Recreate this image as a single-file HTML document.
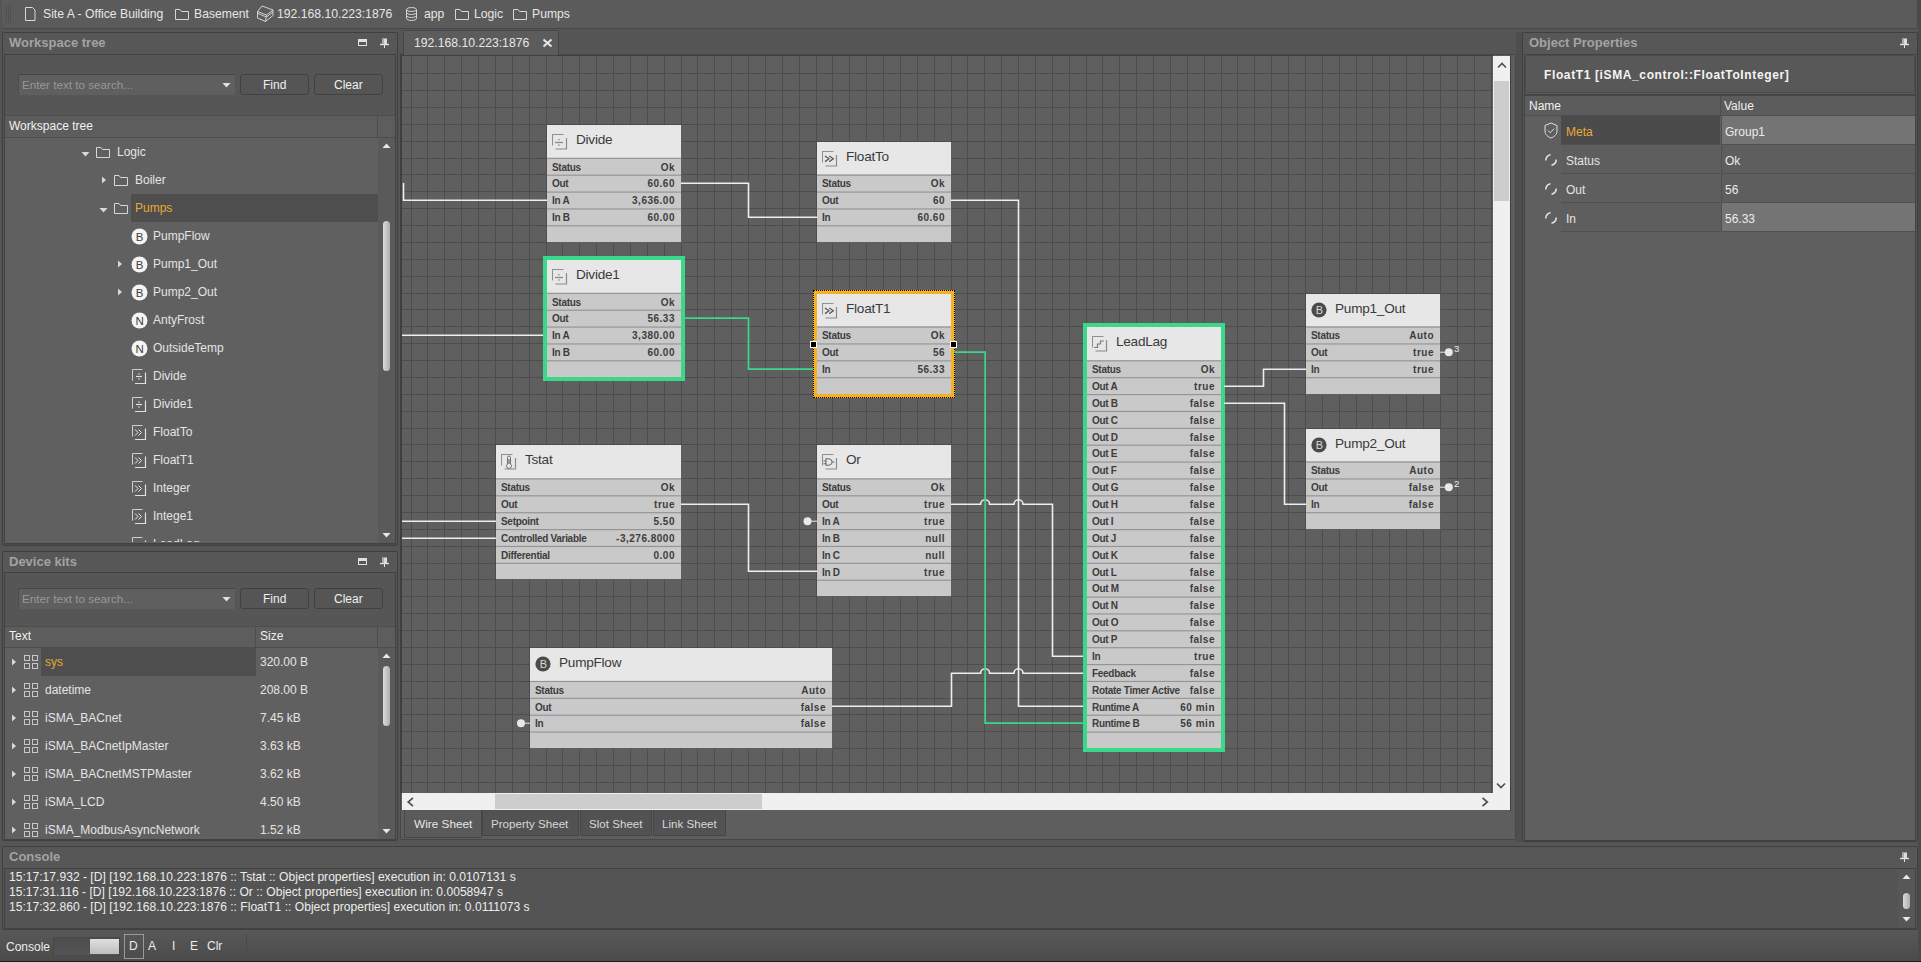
<!DOCTYPE html><html><head><meta charset="utf-8"><style>
*{box-sizing:border-box;margin:0;padding:0}
html,body{width:1921px;height:962px;overflow:hidden;background:#555555;font-family:"Liberation Sans", sans-serif;}
.ab{position:absolute}
.t{position:absolute;white-space:pre;line-height:1}
</style></head><body><div class="ab" style="left:0;top:0;width:1921px;height:962px;overflow:hidden">

<div class="ab" style="left:2px;top:0;width:1916px;height:29px;background:#5b5b5b;border-bottom:1px solid #474747;border-right:1px solid #4a4a4a;border-radius:0 0 3px 3px"></div>
<div class="ab" style="left:1918px;top:0;width:3px;height:962px;background:#4a4a4a"></div>
<div class="ab" style="left:6px;top:5px;width:1px;height:18px;background:#505050"></div>
<div class="ab" style="left:8px;top:5px;width:1px;height:18px;background:#505050"></div>
<div class="ab" style="left:10px;top:5px;width:1px;height:18px;background:#505050"></div>
<svg class="ab" style="left:24px;top:6px" width="12" height="16" viewBox="0 0 12 16"><path d="M1.5 1.5h7l2.5 2.5v10.5h-9.5z" fill="none" stroke="#d8d8d8" stroke-width="1"/></svg>
<div class="t" style="left:43px;top:8px;font-size:12.2px;color:#e6e6e6;">Site A - Office Building</div>
<svg class="ab" style="left:174px;top:7px" width="16" height="14" viewBox="0 0 16 14"><path d="M1.5 2.5h4.5l1.5 2h7v8h-13z" fill="none" stroke="#d6d6d6" stroke-width="1" stroke-linejoin="round"/></svg>
<div class="t" style="left:194px;top:8px;font-size:12.2px;color:#e6e6e6;">Basement</div>
<svg class="ab" style="left:256px;top:5px" width="19" height="19" viewBox="0 0 19 19"><path d="M1.5 6.5L6 1L17 5L17 10.5L9.5 16.5L1.5 13Z M1.5 6.5L10.5 10L17 5 M10.5 10L9.5 16.5 M2 8.5L10.5 12L17 7" fill="none" stroke="#d2d2d2" stroke-width="1" stroke-linejoin="round"/></svg>
<div class="t" style="left:277px;top:8px;font-size:12.2px;color:#e6e6e6;">192.168.10.223:1876</div>
<svg class="ab" style="left:405px;top:6px" width="13" height="16" viewBox="0 0 13 16"><ellipse cx="6.5" cy="3.5" rx="5" ry="2" fill="none" stroke="#d6d6d6"/><path d="M1.5 3.5v9c0 1.1 2.2 2 5 2s5-.9 5-2v-9 M1.5 6.5c0 1.1 2.2 2 5 2s5-.9 5-2 M1.5 9.5c0 1.1 2.2 2 5 2s5-.9 5-2" fill="none" stroke="#d6d6d6"/></svg>
<div class="t" style="left:424px;top:8px;font-size:12.2px;color:#e6e6e6;">app</div>
<svg class="ab" style="left:454px;top:7px" width="16" height="14" viewBox="0 0 16 14"><path d="M1.5 2.5h4.5l1.5 2h7v8h-13z" fill="none" stroke="#d6d6d6" stroke-width="1" stroke-linejoin="round"/></svg>
<div class="t" style="left:474px;top:8px;font-size:12.2px;color:#e6e6e6;">Logic</div>
<svg class="ab" style="left:512px;top:7px" width="16" height="14" viewBox="0 0 16 14"><path d="M1.5 2.5h4.5l1.5 2h7v8h-13z" fill="none" stroke="#d6d6d6" stroke-width="1" stroke-linejoin="round"/></svg>
<div class="t" style="left:532px;top:8px;font-size:12.2px;color:#e6e6e6;">Pumps</div>
<div class="ab" style="left:2px;top:32px;width:396px;height:514px;background:#575757;border:1px solid #3f3f3f;border-radius:2px"></div>
<div class="t" style="left:9px;top:36px;font-size:13px;color:#a3a3a3;font-weight:bold;">Workspace tree</div>
<svg class="ab" style="left:380px;top:38px" width="9" height="10" viewBox="0 0 9 10"><path d="M2 0.5h5v5.5h-5z" fill="#dcdcdc"/><path d="M0 6.5h9" stroke="#e0e0e0" stroke-width="1.4"/><path d="M4.5 7v3" stroke="#e0e0e0" stroke-width="1"/><path d="M3 1v5" stroke="#7a7a7a" stroke-width="1"/></svg>
<div class="ab" style="left:358px;top:39px;width:9px;height:7px;border:1.5px solid #e0e0e0;border-top-width:3px"></div>
<div class="ab" style="left:2px;top:551px;width:396px;height:290px;background:#575757;border:1px solid #3f3f3f;border-radius:2px"></div>
<div class="t" style="left:9px;top:555px;font-size:13px;color:#a3a3a3;font-weight:bold;">Device kits</div>
<svg class="ab" style="left:380px;top:557px" width="9" height="10" viewBox="0 0 9 10"><path d="M2 0.5h5v5.5h-5z" fill="#dcdcdc"/><path d="M0 6.5h9" stroke="#e0e0e0" stroke-width="1.4"/><path d="M4.5 7v3" stroke="#e0e0e0" stroke-width="1"/><path d="M3 1v5" stroke="#7a7a7a" stroke-width="1"/></svg>
<div class="ab" style="left:358px;top:558px;width:9px;height:7px;border:1.5px solid #e0e0e0;border-top-width:3px"></div>
<div class="ab" style="left:1522px;top:32px;width:396px;height:810px;background:#575757;border:1px solid #3f3f3f;border-radius:2px"></div>
<div class="t" style="left:1529px;top:36px;font-size:13px;color:#a3a3a3;font-weight:bold;">Object Properties</div>
<svg class="ab" style="left:1900px;top:38px" width="9" height="10" viewBox="0 0 9 10"><path d="M2 0.5h5v5.5h-5z" fill="#dcdcdc"/><path d="M0 6.5h9" stroke="#e0e0e0" stroke-width="1.4"/><path d="M4.5 7v3" stroke="#e0e0e0" stroke-width="1"/><path d="M3 1v5" stroke="#7a7a7a" stroke-width="1"/></svg>
<div class="ab" style="left:2px;top:846px;width:1916px;height:84px;background:#575757;border:1px solid #3f3f3f;border-radius:2px"></div>
<div class="t" style="left:9px;top:850px;font-size:13px;color:#a3a3a3;font-weight:bold;">Console</div>
<svg class="ab" style="left:1900px;top:852px" width="9" height="10" viewBox="0 0 9 10"><path d="M2 0.5h5v5.5h-5z" fill="#dcdcdc"/><path d="M0 6.5h9" stroke="#e0e0e0" stroke-width="1.4"/><path d="M4.5 7v3" stroke="#e0e0e0" stroke-width="1"/><path d="M3 1v5" stroke="#7a7a7a" stroke-width="1"/></svg>
<div class="ab" style="left:400px;top:54px;width:1116px;height:786px;background:#5e5e5e;border:1px solid #474747;border-radius:2px"></div>
<div class="ab" style="left:403px;top:30px;width:156px;height:26px;background:#5c5c5c;border:1px solid #474747;border-bottom:none;border-radius:2px 2px 0 0"></div>
<div class="t" style="left:414px;top:37px;font-size:12.2px;color:#e6e6e6;">192.168.10.223:1876</div>
<svg class="ab" style="left:542px;top:38px" width="11" height="10" viewBox="0 0 11 10"><path d="M1.5 1.5l8 7 M9.5 1.5l-8 7" stroke="#e8e8e8" stroke-width="2"/></svg>
<div class="ab" style="left:400px;top:55px;width:1093px;height:1px;background:#404040"></div>
<div class="ab" style="left:400px;top:54px;width:2px;height:739px;background:#404040"></div>
<div class="ab" style="left:402px;top:56px;width:1091px;height:737px;background:#5f5f5f;overflow:hidden">
<div class="ab" style="left:9px;top:0;width:1px;height:737px;background:#4d4d4d"></div>
<div class="ab" style="left:25px;top:0;width:1px;height:737px;background:#4d4d4d"></div>
<div class="ab" style="left:42px;top:0;width:1px;height:737px;background:#4d4d4d"></div>
<div class="ab" style="left:59px;top:0;width:1px;height:737px;background:#4d4d4d"></div>
<div class="ab" style="left:76px;top:0;width:1px;height:737px;background:#4d4d4d"></div>
<div class="ab" style="left:93px;top:0;width:1px;height:737px;background:#4d4d4d"></div>
<div class="ab" style="left:110px;top:0;width:1px;height:737px;background:#4d4d4d"></div>
<div class="ab" style="left:127px;top:0;width:1px;height:737px;background:#4d4d4d"></div>
<div class="ab" style="left:144px;top:0;width:1px;height:737px;background:#4d4d4d"></div>
<div class="ab" style="left:160px;top:0;width:1px;height:737px;background:#4d4d4d"></div>
<div class="ab" style="left:177px;top:0;width:1px;height:737px;background:#4d4d4d"></div>
<div class="ab" style="left:194px;top:0;width:1px;height:737px;background:#4d4d4d"></div>
<div class="ab" style="left:211px;top:0;width:1px;height:737px;background:#4d4d4d"></div>
<div class="ab" style="left:228px;top:0;width:1px;height:737px;background:#4d4d4d"></div>
<div class="ab" style="left:245px;top:0;width:1px;height:737px;background:#4d4d4d"></div>
<div class="ab" style="left:262px;top:0;width:1px;height:737px;background:#4d4d4d"></div>
<div class="ab" style="left:279px;top:0;width:1px;height:737px;background:#4d4d4d"></div>
<div class="ab" style="left:295px;top:0;width:1px;height:737px;background:#4d4d4d"></div>
<div class="ab" style="left:312px;top:0;width:1px;height:737px;background:#4d4d4d"></div>
<div class="ab" style="left:329px;top:0;width:1px;height:737px;background:#4d4d4d"></div>
<div class="ab" style="left:346px;top:0;width:1px;height:737px;background:#4d4d4d"></div>
<div class="ab" style="left:363px;top:0;width:1px;height:737px;background:#4d4d4d"></div>
<div class="ab" style="left:380px;top:0;width:1px;height:737px;background:#4d4d4d"></div>
<div class="ab" style="left:397px;top:0;width:1px;height:737px;background:#4d4d4d"></div>
<div class="ab" style="left:414px;top:0;width:1px;height:737px;background:#4d4d4d"></div>
<div class="ab" style="left:430px;top:0;width:1px;height:737px;background:#4d4d4d"></div>
<div class="ab" style="left:447px;top:0;width:1px;height:737px;background:#4d4d4d"></div>
<div class="ab" style="left:464px;top:0;width:1px;height:737px;background:#4d4d4d"></div>
<div class="ab" style="left:481px;top:0;width:1px;height:737px;background:#4d4d4d"></div>
<div class="ab" style="left:498px;top:0;width:1px;height:737px;background:#4d4d4d"></div>
<div class="ab" style="left:515px;top:0;width:1px;height:737px;background:#4d4d4d"></div>
<div class="ab" style="left:532px;top:0;width:1px;height:737px;background:#4d4d4d"></div>
<div class="ab" style="left:549px;top:0;width:1px;height:737px;background:#4d4d4d"></div>
<div class="ab" style="left:565px;top:0;width:1px;height:737px;background:#4d4d4d"></div>
<div class="ab" style="left:582px;top:0;width:1px;height:737px;background:#4d4d4d"></div>
<div class="ab" style="left:599px;top:0;width:1px;height:737px;background:#4d4d4d"></div>
<div class="ab" style="left:616px;top:0;width:1px;height:737px;background:#4d4d4d"></div>
<div class="ab" style="left:633px;top:0;width:1px;height:737px;background:#4d4d4d"></div>
<div class="ab" style="left:650px;top:0;width:1px;height:737px;background:#4d4d4d"></div>
<div class="ab" style="left:667px;top:0;width:1px;height:737px;background:#4d4d4d"></div>
<div class="ab" style="left:684px;top:0;width:1px;height:737px;background:#4d4d4d"></div>
<div class="ab" style="left:700px;top:0;width:1px;height:737px;background:#4d4d4d"></div>
<div class="ab" style="left:717px;top:0;width:1px;height:737px;background:#4d4d4d"></div>
<div class="ab" style="left:734px;top:0;width:1px;height:737px;background:#4d4d4d"></div>
<div class="ab" style="left:751px;top:0;width:1px;height:737px;background:#4d4d4d"></div>
<div class="ab" style="left:768px;top:0;width:1px;height:737px;background:#4d4d4d"></div>
<div class="ab" style="left:785px;top:0;width:1px;height:737px;background:#4d4d4d"></div>
<div class="ab" style="left:802px;top:0;width:1px;height:737px;background:#4d4d4d"></div>
<div class="ab" style="left:819px;top:0;width:1px;height:737px;background:#4d4d4d"></div>
<div class="ab" style="left:835px;top:0;width:1px;height:737px;background:#4d4d4d"></div>
<div class="ab" style="left:852px;top:0;width:1px;height:737px;background:#4d4d4d"></div>
<div class="ab" style="left:869px;top:0;width:1px;height:737px;background:#4d4d4d"></div>
<div class="ab" style="left:886px;top:0;width:1px;height:737px;background:#4d4d4d"></div>
<div class="ab" style="left:903px;top:0;width:1px;height:737px;background:#4d4d4d"></div>
<div class="ab" style="left:920px;top:0;width:1px;height:737px;background:#4d4d4d"></div>
<div class="ab" style="left:937px;top:0;width:1px;height:737px;background:#4d4d4d"></div>
<div class="ab" style="left:954px;top:0;width:1px;height:737px;background:#4d4d4d"></div>
<div class="ab" style="left:970px;top:0;width:1px;height:737px;background:#4d4d4d"></div>
<div class="ab" style="left:987px;top:0;width:1px;height:737px;background:#4d4d4d"></div>
<div class="ab" style="left:1004px;top:0;width:1px;height:737px;background:#4d4d4d"></div>
<div class="ab" style="left:1021px;top:0;width:1px;height:737px;background:#4d4d4d"></div>
<div class="ab" style="left:1038px;top:0;width:1px;height:737px;background:#4d4d4d"></div>
<div class="ab" style="left:1055px;top:0;width:1px;height:737px;background:#4d4d4d"></div>
<div class="ab" style="left:1072px;top:0;width:1px;height:737px;background:#4d4d4d"></div>
<div class="ab" style="left:1089px;top:0;width:1px;height:737px;background:#4d4d4d"></div>
<div class="ab" style="left:0;top:17px;width:1091px;height:1px;background:#4d4d4d"></div>
<div class="ab" style="left:0;top:34px;width:1091px;height:1px;background:#4d4d4d"></div>
<div class="ab" style="left:0;top:51px;width:1091px;height:1px;background:#4d4d4d"></div>
<div class="ab" style="left:0;top:68px;width:1091px;height:1px;background:#4d4d4d"></div>
<div class="ab" style="left:0;top:85px;width:1091px;height:1px;background:#4d4d4d"></div>
<div class="ab" style="left:0;top:102px;width:1091px;height:1px;background:#4d4d4d"></div>
<div class="ab" style="left:0;top:118px;width:1091px;height:1px;background:#4d4d4d"></div>
<div class="ab" style="left:0;top:135px;width:1091px;height:1px;background:#4d4d4d"></div>
<div class="ab" style="left:0;top:152px;width:1091px;height:1px;background:#4d4d4d"></div>
<div class="ab" style="left:0;top:169px;width:1091px;height:1px;background:#4d4d4d"></div>
<div class="ab" style="left:0;top:186px;width:1091px;height:1px;background:#4d4d4d"></div>
<div class="ab" style="left:0;top:203px;width:1091px;height:1px;background:#4d4d4d"></div>
<div class="ab" style="left:0;top:220px;width:1091px;height:1px;background:#4d4d4d"></div>
<div class="ab" style="left:0;top:237px;width:1091px;height:1px;background:#4d4d4d"></div>
<div class="ab" style="left:0;top:253px;width:1091px;height:1px;background:#4d4d4d"></div>
<div class="ab" style="left:0;top:270px;width:1091px;height:1px;background:#4d4d4d"></div>
<div class="ab" style="left:0;top:287px;width:1091px;height:1px;background:#4d4d4d"></div>
<div class="ab" style="left:0;top:304px;width:1091px;height:1px;background:#4d4d4d"></div>
<div class="ab" style="left:0;top:321px;width:1091px;height:1px;background:#4d4d4d"></div>
<div class="ab" style="left:0;top:338px;width:1091px;height:1px;background:#4d4d4d"></div>
<div class="ab" style="left:0;top:355px;width:1091px;height:1px;background:#4d4d4d"></div>
<div class="ab" style="left:0;top:372px;width:1091px;height:1px;background:#4d4d4d"></div>
<div class="ab" style="left:0;top:388px;width:1091px;height:1px;background:#4d4d4d"></div>
<div class="ab" style="left:0;top:405px;width:1091px;height:1px;background:#4d4d4d"></div>
<div class="ab" style="left:0;top:422px;width:1091px;height:1px;background:#4d4d4d"></div>
<div class="ab" style="left:0;top:439px;width:1091px;height:1px;background:#4d4d4d"></div>
<div class="ab" style="left:0;top:456px;width:1091px;height:1px;background:#4d4d4d"></div>
<div class="ab" style="left:0;top:473px;width:1091px;height:1px;background:#4d4d4d"></div>
<div class="ab" style="left:0;top:490px;width:1091px;height:1px;background:#4d4d4d"></div>
<div class="ab" style="left:0;top:507px;width:1091px;height:1px;background:#4d4d4d"></div>
<div class="ab" style="left:0;top:523px;width:1091px;height:1px;background:#4d4d4d"></div>
<div class="ab" style="left:0;top:540px;width:1091px;height:1px;background:#4d4d4d"></div>
<div class="ab" style="left:0;top:557px;width:1091px;height:1px;background:#4d4d4d"></div>
<div class="ab" style="left:0;top:574px;width:1091px;height:1px;background:#4d4d4d"></div>
<div class="ab" style="left:0;top:591px;width:1091px;height:1px;background:#4d4d4d"></div>
<div class="ab" style="left:0;top:608px;width:1091px;height:1px;background:#4d4d4d"></div>
<div class="ab" style="left:0;top:625px;width:1091px;height:1px;background:#4d4d4d"></div>
<div class="ab" style="left:0;top:642px;width:1091px;height:1px;background:#4d4d4d"></div>
<div class="ab" style="left:0;top:658px;width:1091px;height:1px;background:#4d4d4d"></div>
<div class="ab" style="left:0;top:675px;width:1091px;height:1px;background:#4d4d4d"></div>
<div class="ab" style="left:0;top:692px;width:1091px;height:1px;background:#4d4d4d"></div>
<div class="ab" style="left:0;top:709px;width:1091px;height:1px;background:#4d4d4d"></div>
<div class="ab" style="left:0;top:726px;width:1091px;height:1px;background:#4d4d4d"></div>
<div class="ab" style="left:145px;top:69px;width:135px;height:118px;background:#5f5f5f"></div>
<div class="ab" style="left:145px;top:69px;width:134px;height:117px;background:#c9c9c9"></div>
<div class="ab" style="left:145px;top:69px;width:134px;height:33px;background:#e7e7e7"></div>
<svg class="ab" style="left:145px;top:69px" width="134" height="117"><rect x="0" y="32.75" width="134" height="1.15" fill="#949494"/><rect x="0" y="49.63" width="134" height="1.15" fill="#949494"/><rect x="0" y="66.50" width="134" height="1.15" fill="#949494"/><rect x="0" y="83.38" width="134" height="1.15" fill="#949494"/><rect x="0" y="100.25" width="134" height="1.15" fill="#949494"/></svg>
<svg class="ab" style="left:150px;top:76.5px" width="17" height="17" viewBox="0 0 17 17"><path d="M0.5 12.5v-11h11" stroke="#909090" stroke-width="1.1" fill="none"/><path d="M3.5 16h11v-11" stroke="#8a8a8a" stroke-width="1.2" fill="none"/><path d="M3 9.5h8" stroke="#8a8a8a" stroke-width="1.3"/><circle cx="7" cy="6.7" r=".8" fill="#8a8a8a"/><circle cx="7" cy="12" r=".8" fill="#8a8a8a"/></svg>
<div class="t" style="left:174px;top:77px;font-size:13.6px;color:#3a3a3a;letter-spacing:-0.25px">Divide</div>
<div class="t" style="left:150px;top:107px;font-size:10px;color:#3d3d3d;font-weight:bold;letter-spacing:-0.3px">Status</div>
<div class="t" style="left:145px;top:107px;width:128px;text-align:right;font-size:10px;color:#3d3d3d;font-weight:bold;letter-spacing:0.5px">Ok</div>
<div class="t" style="left:150px;top:123px;font-size:10px;color:#3d3d3d;font-weight:bold;letter-spacing:-0.3px">Out</div>
<div class="t" style="left:145px;top:123px;width:128px;text-align:right;font-size:10px;color:#3d3d3d;font-weight:bold;letter-spacing:0.5px">60.60</div>
<div class="t" style="left:150px;top:140px;font-size:10px;color:#3d3d3d;font-weight:bold;letter-spacing:-0.3px">In A</div>
<div class="t" style="left:145px;top:140px;width:128px;text-align:right;font-size:10px;color:#3d3d3d;font-weight:bold;letter-spacing:0.5px">3,636.00</div>
<div class="t" style="left:150px;top:157px;font-size:10px;color:#3d3d3d;font-weight:bold;letter-spacing:-0.3px">In B</div>
<div class="t" style="left:145px;top:157px;width:128px;text-align:right;font-size:10px;color:#3d3d3d;font-weight:bold;letter-spacing:0.5px">60.00</div>
<div class="ab" style="left:415px;top:86px;width:135px;height:101px;background:#5f5f5f"></div>
<div class="ab" style="left:415px;top:86px;width:134px;height:100px;background:#c9c9c9"></div>
<div class="ab" style="left:415px;top:86px;width:134px;height:32px;background:#e7e7e7"></div>
<svg class="ab" style="left:415px;top:86px" width="134" height="100"><rect x="0" y="32.63" width="134" height="1.15" fill="#949494"/><rect x="0" y="49.50" width="134" height="1.15" fill="#949494"/><rect x="0" y="66.38" width="134" height="1.15" fill="#949494"/><rect x="0" y="83.25" width="134" height="1.15" fill="#949494"/></svg>
<svg class="ab" style="left:420px;top:93.5px" width="17" height="17" viewBox="0 0 17 17"><path d="M0.5 12.5v-11h11" stroke="#909090" stroke-width="1.1" fill="none"/><path d="M3.5 16h11v-11" stroke="#8a8a8a" stroke-width="1.2" fill="none"/><path d="M3 6l4 2.8-4 2.8 M7.3 6l4 2.8-4 2.8" stroke="#5a5a5a" stroke-width="1.3" fill="none"/></svg>
<div class="t" style="left:444px;top:94px;font-size:13.6px;color:#3a3a3a;letter-spacing:-0.25px">FloatTo</div>
<div class="t" style="left:420px;top:123px;font-size:10px;color:#3d3d3d;font-weight:bold;letter-spacing:-0.3px">Status</div>
<div class="t" style="left:415px;top:123px;width:128px;text-align:right;font-size:10px;color:#3d3d3d;font-weight:bold;letter-spacing:0.5px">Ok</div>
<div class="t" style="left:420px;top:140px;font-size:10px;color:#3d3d3d;font-weight:bold;letter-spacing:-0.3px">Out</div>
<div class="t" style="left:415px;top:140px;width:128px;text-align:right;font-size:10px;color:#3d3d3d;font-weight:bold;letter-spacing:0.5px">60</div>
<div class="t" style="left:420px;top:157px;font-size:10px;color:#3d3d3d;font-weight:bold;letter-spacing:-0.3px">In</div>
<div class="t" style="left:415px;top:157px;width:128px;text-align:right;font-size:10px;color:#3d3d3d;font-weight:bold;letter-spacing:0.5px">60.60</div>
<div class="ab" style="left:141px;top:200px;width:142px;height:125px;background:#3ad88a"></div>
<div class="ab" style="left:145px;top:204px;width:134px;height:117px;background:#c9c9c9"></div>
<div class="ab" style="left:145px;top:204px;width:134px;height:33px;background:#e7e7e7"></div>
<svg class="ab" style="left:145px;top:204px" width="134" height="117"><rect x="0" y="32.75" width="134" height="1.15" fill="#949494"/><rect x="0" y="49.63" width="134" height="1.15" fill="#949494"/><rect x="0" y="66.50" width="134" height="1.15" fill="#949494"/><rect x="0" y="83.38" width="134" height="1.15" fill="#949494"/><rect x="0" y="100.25" width="134" height="1.15" fill="#949494"/></svg>
<svg class="ab" style="left:150px;top:211.5px" width="17" height="17" viewBox="0 0 17 17"><path d="M0.5 12.5v-11h11" stroke="#909090" stroke-width="1.1" fill="none"/><path d="M3.5 16h11v-11" stroke="#8a8a8a" stroke-width="1.2" fill="none"/><path d="M3 9.5h8" stroke="#8a8a8a" stroke-width="1.3"/><circle cx="7" cy="6.7" r=".8" fill="#8a8a8a"/><circle cx="7" cy="12" r=".8" fill="#8a8a8a"/></svg>
<div class="t" style="left:174px;top:212px;font-size:13.6px;color:#3a3a3a;letter-spacing:-0.25px">Divide1</div>
<div class="t" style="left:150px;top:242px;font-size:10px;color:#3d3d3d;font-weight:bold;letter-spacing:-0.3px">Status</div>
<div class="t" style="left:145px;top:242px;width:128px;text-align:right;font-size:10px;color:#3d3d3d;font-weight:bold;letter-spacing:0.5px">Ok</div>
<div class="t" style="left:150px;top:258px;font-size:10px;color:#3d3d3d;font-weight:bold;letter-spacing:-0.3px">Out</div>
<div class="t" style="left:145px;top:258px;width:128px;text-align:right;font-size:10px;color:#3d3d3d;font-weight:bold;letter-spacing:0.5px">56.33</div>
<div class="t" style="left:150px;top:275px;font-size:10px;color:#3d3d3d;font-weight:bold;letter-spacing:-0.3px">In A</div>
<div class="t" style="left:145px;top:275px;width:128px;text-align:right;font-size:10px;color:#3d3d3d;font-weight:bold;letter-spacing:0.5px">3,380.00</div>
<div class="t" style="left:150px;top:292px;font-size:10px;color:#3d3d3d;font-weight:bold;letter-spacing:-0.3px">In B</div>
<div class="t" style="left:145px;top:292px;width:128px;text-align:right;font-size:10px;color:#3d3d3d;font-weight:bold;letter-spacing:0.5px">60.00</div>
<div class="ab" style="left:411px;top:234px;width:142px;height:108px;background:#f4b124;border:1px dotted #000"></div>
<div class="ab" style="left:415px;top:238px;width:134px;height:100px;background:#c9c9c9"></div>
<div class="ab" style="left:415px;top:238px;width:134px;height:32px;background:#e7e7e7"></div>
<svg class="ab" style="left:415px;top:238px" width="134" height="100"><rect x="0" y="32.50" width="134" height="1.15" fill="#949494"/><rect x="0" y="49.38" width="134" height="1.15" fill="#949494"/><rect x="0" y="66.25" width="134" height="1.15" fill="#949494"/><rect x="0" y="83.13" width="134" height="1.15" fill="#949494"/></svg>
<svg class="ab" style="left:420px;top:245.5px" width="17" height="17" viewBox="0 0 17 17"><path d="M0.5 12.5v-11h11" stroke="#909090" stroke-width="1.1" fill="none"/><path d="M3.5 16h11v-11" stroke="#8a8a8a" stroke-width="1.2" fill="none"/><path d="M3 6l4 2.8-4 2.8 M7.3 6l4 2.8-4 2.8" stroke="#5a5a5a" stroke-width="1.3" fill="none"/></svg>
<div class="t" style="left:444px;top:246px;font-size:13.6px;color:#3a3a3a;letter-spacing:-0.25px">FloatT1</div>
<div class="t" style="left:420px;top:275px;font-size:10px;color:#3d3d3d;font-weight:bold;letter-spacing:-0.3px">Status</div>
<div class="t" style="left:415px;top:275px;width:128px;text-align:right;font-size:10px;color:#3d3d3d;font-weight:bold;letter-spacing:0.5px">Ok</div>
<div class="t" style="left:420px;top:292px;font-size:10px;color:#3d3d3d;font-weight:bold;letter-spacing:-0.3px">Out</div>
<div class="t" style="left:415px;top:292px;width:128px;text-align:right;font-size:10px;color:#3d3d3d;font-weight:bold;letter-spacing:0.5px">56</div>
<div class="t" style="left:420px;top:309px;font-size:10px;color:#3d3d3d;font-weight:bold;letter-spacing:-0.3px">In</div>
<div class="t" style="left:415px;top:309px;width:128px;text-align:right;font-size:10px;color:#3d3d3d;font-weight:bold;letter-spacing:0.5px">56.33</div>
<div class="ab" style="left:681px;top:267px;width:142px;height:429px;background:#3ad88a"></div>
<div class="ab" style="left:685px;top:271px;width:134px;height:421px;background:#c9c9c9"></div>
<div class="ab" style="left:685px;top:271px;width:134px;height:33px;background:#e7e7e7"></div>
<svg class="ab" style="left:685px;top:271px" width="134" height="421"><rect x="0" y="33.25" width="134" height="1.15" fill="#949494"/><rect x="0" y="50.13" width="134" height="1.15" fill="#949494"/><rect x="0" y="67.00" width="134" height="1.15" fill="#949494"/><rect x="0" y="83.88" width="134" height="1.15" fill="#949494"/><rect x="0" y="100.75" width="134" height="1.15" fill="#949494"/><rect x="0" y="117.63" width="134" height="1.15" fill="#949494"/><rect x="0" y="134.50" width="134" height="1.15" fill="#949494"/><rect x="0" y="151.38" width="134" height="1.15" fill="#949494"/><rect x="0" y="168.25" width="134" height="1.15" fill="#949494"/><rect x="0" y="185.13" width="134" height="1.15" fill="#949494"/><rect x="0" y="202.01" width="134" height="1.15" fill="#949494"/><rect x="0" y="218.88" width="134" height="1.15" fill="#949494"/><rect x="0" y="235.76" width="134" height="1.15" fill="#949494"/><rect x="0" y="252.63" width="134" height="1.15" fill="#949494"/><rect x="0" y="269.51" width="134" height="1.15" fill="#949494"/><rect x="0" y="286.38" width="134" height="1.15" fill="#949494"/><rect x="0" y="303.26" width="134" height="1.15" fill="#949494"/><rect x="0" y="320.13" width="134" height="1.15" fill="#949494"/><rect x="0" y="337.01" width="134" height="1.15" fill="#949494"/><rect x="0" y="353.88" width="134" height="1.15" fill="#949494"/><rect x="0" y="370.76" width="134" height="1.15" fill="#949494"/><rect x="0" y="387.63" width="134" height="1.15" fill="#949494"/><rect x="0" y="404.51" width="134" height="1.15" fill="#949494"/></svg>
<svg class="ab" style="left:690px;top:278.5px" width="17" height="17" viewBox="0 0 17 17"><path d="M0.5 12.5v-11h11" stroke="#909090" stroke-width="1.1" fill="none"/><path d="M3.5 16h11v-11" stroke="#8a8a8a" stroke-width="1.2" fill="none"/><path d="M2 12.5h3.5v-3.5h3v-3h3.5" stroke="#7a7a7a" stroke-width="1.2" fill="none"/></svg>
<div class="t" style="left:714px;top:279px;font-size:13.6px;color:#3a3a3a;letter-spacing:-0.25px">LeadLag</div>
<div class="t" style="left:690px;top:309px;font-size:10px;color:#3d3d3d;font-weight:bold;letter-spacing:-0.3px">Status</div>
<div class="t" style="left:685px;top:309px;width:128px;text-align:right;font-size:10px;color:#3d3d3d;font-weight:bold;letter-spacing:0.5px">Ok</div>
<div class="t" style="left:690px;top:326px;font-size:10px;color:#3d3d3d;font-weight:bold;letter-spacing:-0.3px">Out A</div>
<div class="t" style="left:685px;top:326px;width:128px;text-align:right;font-size:10px;color:#3d3d3d;font-weight:bold;letter-spacing:0.5px">true</div>
<div class="t" style="left:690px;top:343px;font-size:10px;color:#3d3d3d;font-weight:bold;letter-spacing:-0.3px">Out B</div>
<div class="t" style="left:685px;top:343px;width:128px;text-align:right;font-size:10px;color:#3d3d3d;font-weight:bold;letter-spacing:0.5px">false</div>
<div class="t" style="left:690px;top:360px;font-size:10px;color:#3d3d3d;font-weight:bold;letter-spacing:-0.3px">Out C</div>
<div class="t" style="left:685px;top:360px;width:128px;text-align:right;font-size:10px;color:#3d3d3d;font-weight:bold;letter-spacing:0.5px">false</div>
<div class="t" style="left:690px;top:377px;font-size:10px;color:#3d3d3d;font-weight:bold;letter-spacing:-0.3px">Out D</div>
<div class="t" style="left:685px;top:377px;width:128px;text-align:right;font-size:10px;color:#3d3d3d;font-weight:bold;letter-spacing:0.5px">false</div>
<div class="t" style="left:690px;top:393px;font-size:10px;color:#3d3d3d;font-weight:bold;letter-spacing:-0.3px">Out E</div>
<div class="t" style="left:685px;top:393px;width:128px;text-align:right;font-size:10px;color:#3d3d3d;font-weight:bold;letter-spacing:0.5px">false</div>
<div class="t" style="left:690px;top:410px;font-size:10px;color:#3d3d3d;font-weight:bold;letter-spacing:-0.3px">Out F</div>
<div class="t" style="left:685px;top:410px;width:128px;text-align:right;font-size:10px;color:#3d3d3d;font-weight:bold;letter-spacing:0.5px">false</div>
<div class="t" style="left:690px;top:427px;font-size:10px;color:#3d3d3d;font-weight:bold;letter-spacing:-0.3px">Out G</div>
<div class="t" style="left:685px;top:427px;width:128px;text-align:right;font-size:10px;color:#3d3d3d;font-weight:bold;letter-spacing:0.5px">false</div>
<div class="t" style="left:690px;top:444px;font-size:10px;color:#3d3d3d;font-weight:bold;letter-spacing:-0.3px">Out H</div>
<div class="t" style="left:685px;top:444px;width:128px;text-align:right;font-size:10px;color:#3d3d3d;font-weight:bold;letter-spacing:0.5px">false</div>
<div class="t" style="left:690px;top:461px;font-size:10px;color:#3d3d3d;font-weight:bold;letter-spacing:-0.3px">Out I</div>
<div class="t" style="left:685px;top:461px;width:128px;text-align:right;font-size:10px;color:#3d3d3d;font-weight:bold;letter-spacing:0.5px">false</div>
<div class="t" style="left:690px;top:478px;font-size:10px;color:#3d3d3d;font-weight:bold;letter-spacing:-0.3px">Out J</div>
<div class="t" style="left:685px;top:478px;width:128px;text-align:right;font-size:10px;color:#3d3d3d;font-weight:bold;letter-spacing:0.5px">false</div>
<div class="t" style="left:690px;top:495px;font-size:10px;color:#3d3d3d;font-weight:bold;letter-spacing:-0.3px">Out K</div>
<div class="t" style="left:685px;top:495px;width:128px;text-align:right;font-size:10px;color:#3d3d3d;font-weight:bold;letter-spacing:0.5px">false</div>
<div class="t" style="left:690px;top:512px;font-size:10px;color:#3d3d3d;font-weight:bold;letter-spacing:-0.3px">Out L</div>
<div class="t" style="left:685px;top:512px;width:128px;text-align:right;font-size:10px;color:#3d3d3d;font-weight:bold;letter-spacing:0.5px">false</div>
<div class="t" style="left:690px;top:528px;font-size:10px;color:#3d3d3d;font-weight:bold;letter-spacing:-0.3px">Out M</div>
<div class="t" style="left:685px;top:528px;width:128px;text-align:right;font-size:10px;color:#3d3d3d;font-weight:bold;letter-spacing:0.5px">false</div>
<div class="t" style="left:690px;top:545px;font-size:10px;color:#3d3d3d;font-weight:bold;letter-spacing:-0.3px">Out N</div>
<div class="t" style="left:685px;top:545px;width:128px;text-align:right;font-size:10px;color:#3d3d3d;font-weight:bold;letter-spacing:0.5px">false</div>
<div class="t" style="left:690px;top:562px;font-size:10px;color:#3d3d3d;font-weight:bold;letter-spacing:-0.3px">Out O</div>
<div class="t" style="left:685px;top:562px;width:128px;text-align:right;font-size:10px;color:#3d3d3d;font-weight:bold;letter-spacing:0.5px">false</div>
<div class="t" style="left:690px;top:579px;font-size:10px;color:#3d3d3d;font-weight:bold;letter-spacing:-0.3px">Out P</div>
<div class="t" style="left:685px;top:579px;width:128px;text-align:right;font-size:10px;color:#3d3d3d;font-weight:bold;letter-spacing:0.5px">false</div>
<div class="t" style="left:690px;top:596px;font-size:10px;color:#3d3d3d;font-weight:bold;letter-spacing:-0.3px">In</div>
<div class="t" style="left:685px;top:596px;width:128px;text-align:right;font-size:10px;color:#3d3d3d;font-weight:bold;letter-spacing:0.5px">true</div>
<div class="t" style="left:690px;top:613px;font-size:10px;color:#3d3d3d;font-weight:bold;letter-spacing:-0.3px">Feedback</div>
<div class="t" style="left:685px;top:613px;width:128px;text-align:right;font-size:10px;color:#3d3d3d;font-weight:bold;letter-spacing:0.5px">false</div>
<div class="t" style="left:690px;top:630px;font-size:10px;color:#3d3d3d;font-weight:bold;letter-spacing:-0.3px">Rotate Timer Active</div>
<div class="t" style="left:685px;top:630px;width:128px;text-align:right;font-size:10px;color:#3d3d3d;font-weight:bold;letter-spacing:0.5px">false</div>
<div class="t" style="left:690px;top:647px;font-size:10px;color:#3d3d3d;font-weight:bold;letter-spacing:-0.3px">Runtime A</div>
<div class="t" style="left:685px;top:647px;width:128px;text-align:right;font-size:10px;color:#3d3d3d;font-weight:bold;letter-spacing:0.5px">60 min</div>
<div class="t" style="left:690px;top:663px;font-size:10px;color:#3d3d3d;font-weight:bold;letter-spacing:-0.3px">Runtime B</div>
<div class="t" style="left:685px;top:663px;width:128px;text-align:right;font-size:10px;color:#3d3d3d;font-weight:bold;letter-spacing:0.5px">56 min</div>
<div class="ab" style="left:904px;top:238px;width:135px;height:101px;background:#5f5f5f"></div>
<div class="ab" style="left:904px;top:238px;width:134px;height:100px;background:#c9c9c9"></div>
<div class="ab" style="left:904px;top:238px;width:134px;height:32px;background:#e7e7e7"></div>
<svg class="ab" style="left:904px;top:238px" width="134" height="100"><rect x="0" y="32.50" width="134" height="1.15" fill="#949494"/><rect x="0" y="49.38" width="134" height="1.15" fill="#949494"/><rect x="0" y="66.25" width="134" height="1.15" fill="#949494"/><rect x="0" y="83.13" width="134" height="1.15" fill="#949494"/></svg>
<svg class="ab" style="left:908.5px;top:245.5px" width="16" height="16" viewBox="0 0 16 16"><circle cx="8" cy="8" r="7.6" fill="#4a4a4a"/><text x="8.3" y="12" text-anchor="middle" font-family="Liberation Sans" font-size="11" fill="#dadada">B</text></svg>
<div class="t" style="left:933px;top:246px;font-size:13.6px;color:#3a3a3a;letter-spacing:-0.25px">Pump1_Out</div>
<div class="t" style="left:909px;top:275px;font-size:10px;color:#3d3d3d;font-weight:bold;letter-spacing:-0.3px">Status</div>
<div class="t" style="left:904px;top:275px;width:128px;text-align:right;font-size:10px;color:#3d3d3d;font-weight:bold;letter-spacing:0.5px">Auto</div>
<div class="t" style="left:909px;top:292px;font-size:10px;color:#3d3d3d;font-weight:bold;letter-spacing:-0.3px">Out</div>
<div class="t" style="left:904px;top:292px;width:128px;text-align:right;font-size:10px;color:#3d3d3d;font-weight:bold;letter-spacing:0.5px">true</div>
<div class="t" style="left:909px;top:309px;font-size:10px;color:#3d3d3d;font-weight:bold;letter-spacing:-0.3px">In</div>
<div class="t" style="left:904px;top:309px;width:128px;text-align:right;font-size:10px;color:#3d3d3d;font-weight:bold;letter-spacing:0.5px">true</div>
<div class="ab" style="left:904px;top:373px;width:135px;height:101px;background:#5f5f5f"></div>
<div class="ab" style="left:904px;top:373px;width:134px;height:100px;background:#c9c9c9"></div>
<div class="ab" style="left:904px;top:373px;width:134px;height:32px;background:#e7e7e7"></div>
<svg class="ab" style="left:904px;top:373px" width="134" height="100"><rect x="0" y="32.50" width="134" height="1.15" fill="#949494"/><rect x="0" y="49.38" width="134" height="1.15" fill="#949494"/><rect x="0" y="66.25" width="134" height="1.15" fill="#949494"/><rect x="0" y="83.13" width="134" height="1.15" fill="#949494"/></svg>
<svg class="ab" style="left:908.5px;top:380.5px" width="16" height="16" viewBox="0 0 16 16"><circle cx="8" cy="8" r="7.6" fill="#4a4a4a"/><text x="8.3" y="12" text-anchor="middle" font-family="Liberation Sans" font-size="11" fill="#dadada">B</text></svg>
<div class="t" style="left:933px;top:381px;font-size:13.6px;color:#3a3a3a;letter-spacing:-0.25px">Pump2_Out</div>
<div class="t" style="left:909px;top:410px;font-size:10px;color:#3d3d3d;font-weight:bold;letter-spacing:-0.3px">Status</div>
<div class="t" style="left:904px;top:410px;width:128px;text-align:right;font-size:10px;color:#3d3d3d;font-weight:bold;letter-spacing:0.5px">Auto</div>
<div class="t" style="left:909px;top:427px;font-size:10px;color:#3d3d3d;font-weight:bold;letter-spacing:-0.3px">Out</div>
<div class="t" style="left:904px;top:427px;width:128px;text-align:right;font-size:10px;color:#3d3d3d;font-weight:bold;letter-spacing:0.5px">false</div>
<div class="t" style="left:909px;top:444px;font-size:10px;color:#3d3d3d;font-weight:bold;letter-spacing:-0.3px">In</div>
<div class="t" style="left:904px;top:444px;width:128px;text-align:right;font-size:10px;color:#3d3d3d;font-weight:bold;letter-spacing:0.5px">false</div>
<div class="ab" style="left:94px;top:389px;width:186px;height:135px;background:#5f5f5f"></div>
<div class="ab" style="left:94px;top:389px;width:185px;height:134px;background:#c9c9c9"></div>
<div class="ab" style="left:94px;top:389px;width:185px;height:33px;background:#e7e7e7"></div>
<svg class="ab" style="left:94px;top:389px" width="185" height="134"><rect x="0" y="33.38" width="185" height="1.15" fill="#949494"/><rect x="0" y="50.25" width="185" height="1.15" fill="#949494"/><rect x="0" y="67.13" width="185" height="1.15" fill="#949494"/><rect x="0" y="84.01" width="185" height="1.15" fill="#949494"/><rect x="0" y="100.88" width="185" height="1.15" fill="#949494"/><rect x="0" y="117.76" width="185" height="1.15" fill="#949494"/></svg>
<svg class="ab" style="left:99px;top:396.5px" width="17" height="17" viewBox="0 0 17 17"><path d="M0.5 12.5v-11h11" stroke="#909090" stroke-width="1.1" fill="none"/><path d="M3.5 16h11v-11" stroke="#8a8a8a" stroke-width="1.2" fill="none"/><path d="M6.5 4.5a1.5 1.5 0 0 1 3 0v6.5a2.5 2.5 0 1 1-3 0z" stroke="#707070" stroke-width="1" fill="none"/><path d="M8 6v5" stroke="#555" stroke-width="1"/></svg>
<div class="t" style="left:123px;top:397px;font-size:13.6px;color:#3a3a3a;letter-spacing:-0.25px">Tstat</div>
<div class="t" style="left:99px;top:427px;font-size:10px;color:#3d3d3d;font-weight:bold;letter-spacing:-0.3px">Status</div>
<div class="t" style="left:94px;top:427px;width:179px;text-align:right;font-size:10px;color:#3d3d3d;font-weight:bold;letter-spacing:0.5px">Ok</div>
<div class="t" style="left:99px;top:444px;font-size:10px;color:#3d3d3d;font-weight:bold;letter-spacing:-0.3px">Out</div>
<div class="t" style="left:94px;top:444px;width:179px;text-align:right;font-size:10px;color:#3d3d3d;font-weight:bold;letter-spacing:0.5px">true</div>
<div class="t" style="left:99px;top:461px;font-size:10px;color:#3d3d3d;font-weight:bold;letter-spacing:-0.3px">Setpoint</div>
<div class="t" style="left:94px;top:461px;width:179px;text-align:right;font-size:10px;color:#3d3d3d;font-weight:bold;letter-spacing:0.5px">5.50</div>
<div class="t" style="left:99px;top:478px;font-size:10px;color:#3d3d3d;font-weight:bold;letter-spacing:-0.3px">Controlled Variable</div>
<div class="t" style="left:94px;top:478px;width:179px;text-align:right;font-size:10px;color:#3d3d3d;font-weight:bold;letter-spacing:0.5px">-3,276.8000</div>
<div class="t" style="left:99px;top:495px;font-size:10px;color:#3d3d3d;font-weight:bold;letter-spacing:-0.3px">Differential</div>
<div class="t" style="left:94px;top:495px;width:179px;text-align:right;font-size:10px;color:#3d3d3d;font-weight:bold;letter-spacing:0.5px">0.00</div>
<div class="ab" style="left:415px;top:389px;width:135px;height:152px;background:#5f5f5f"></div>
<div class="ab" style="left:415px;top:389px;width:134px;height:151px;background:#c9c9c9"></div>
<div class="ab" style="left:415px;top:389px;width:134px;height:33px;background:#e7e7e7"></div>
<svg class="ab" style="left:415px;top:389px" width="134" height="151"><rect x="0" y="33.38" width="134" height="1.15" fill="#949494"/><rect x="0" y="50.25" width="134" height="1.15" fill="#949494"/><rect x="0" y="67.13" width="134" height="1.15" fill="#949494"/><rect x="0" y="84.01" width="134" height="1.15" fill="#949494"/><rect x="0" y="100.88" width="134" height="1.15" fill="#949494"/><rect x="0" y="117.76" width="134" height="1.15" fill="#949494"/><rect x="0" y="134.63" width="134" height="1.15" fill="#949494"/></svg>
<svg class="ab" style="left:420px;top:396.5px" width="17" height="17" viewBox="0 0 17 17"><path d="M0.5 12.5v-11h11" stroke="#909090" stroke-width="1.1" fill="none"/><path d="M3.5 16h11v-11" stroke="#8a8a8a" stroke-width="1.2" fill="none"/><path d="M4 5.8h2.2a3.8 3.25 0 0 1 0 6.5H4z M1.5 8h2.5 M1.5 10.8h2.5 M10 9h2.5" stroke="#6a6a6a" stroke-width="1.1" fill="none"/></svg>
<div class="t" style="left:444px;top:397px;font-size:13.6px;color:#3a3a3a;letter-spacing:-0.25px">Or</div>
<div class="t" style="left:420px;top:427px;font-size:10px;color:#3d3d3d;font-weight:bold;letter-spacing:-0.3px">Status</div>
<div class="t" style="left:415px;top:427px;width:128px;text-align:right;font-size:10px;color:#3d3d3d;font-weight:bold;letter-spacing:0.5px">Ok</div>
<div class="t" style="left:420px;top:444px;font-size:10px;color:#3d3d3d;font-weight:bold;letter-spacing:-0.3px">Out</div>
<div class="t" style="left:415px;top:444px;width:128px;text-align:right;font-size:10px;color:#3d3d3d;font-weight:bold;letter-spacing:0.5px">true</div>
<div class="t" style="left:420px;top:461px;font-size:10px;color:#3d3d3d;font-weight:bold;letter-spacing:-0.3px">In A</div>
<div class="t" style="left:415px;top:461px;width:128px;text-align:right;font-size:10px;color:#3d3d3d;font-weight:bold;letter-spacing:0.5px">true</div>
<div class="t" style="left:420px;top:478px;font-size:10px;color:#3d3d3d;font-weight:bold;letter-spacing:-0.3px">In B</div>
<div class="t" style="left:415px;top:478px;width:128px;text-align:right;font-size:10px;color:#3d3d3d;font-weight:bold;letter-spacing:0.5px">null</div>
<div class="t" style="left:420px;top:495px;font-size:10px;color:#3d3d3d;font-weight:bold;letter-spacing:-0.3px">In C</div>
<div class="t" style="left:415px;top:495px;width:128px;text-align:right;font-size:10px;color:#3d3d3d;font-weight:bold;letter-spacing:0.5px">null</div>
<div class="t" style="left:420px;top:512px;font-size:10px;color:#3d3d3d;font-weight:bold;letter-spacing:-0.3px">In D</div>
<div class="t" style="left:415px;top:512px;width:128px;text-align:right;font-size:10px;color:#3d3d3d;font-weight:bold;letter-spacing:0.5px">true</div>
<div class="ab" style="left:128px;top:592px;width:303px;height:101px;background:#5f5f5f"></div>
<div class="ab" style="left:128px;top:592px;width:302px;height:100px;background:#c9c9c9"></div>
<div class="ab" style="left:128px;top:592px;width:302px;height:33px;background:#e7e7e7"></div>
<svg class="ab" style="left:128px;top:592px" width="302" height="100"><rect x="0" y="32.88" width="302" height="1.15" fill="#949494"/><rect x="0" y="49.76" width="302" height="1.15" fill="#949494"/><rect x="0" y="66.63" width="302" height="1.15" fill="#949494"/><rect x="0" y="83.51" width="302" height="1.15" fill="#949494"/></svg>
<svg class="ab" style="left:132.5px;top:599.5px" width="16" height="16" viewBox="0 0 16 16"><circle cx="8" cy="8" r="7.6" fill="#4a4a4a"/><text x="8.3" y="12" text-anchor="middle" font-family="Liberation Sans" font-size="11" fill="#dadada">B</text></svg>
<div class="t" style="left:157px;top:600px;font-size:13.6px;color:#3a3a3a;letter-spacing:-0.25px">PumpFlow</div>
<div class="t" style="left:133px;top:630px;font-size:10px;color:#3d3d3d;font-weight:bold;letter-spacing:-0.3px">Status</div>
<div class="t" style="left:128px;top:630px;width:296px;text-align:right;font-size:10px;color:#3d3d3d;font-weight:bold;letter-spacing:0.5px">Auto</div>
<div class="t" style="left:133px;top:647px;font-size:10px;color:#3d3d3d;font-weight:bold;letter-spacing:-0.3px">Out</div>
<div class="t" style="left:128px;top:647px;width:296px;text-align:right;font-size:10px;color:#3d3d3d;font-weight:bold;letter-spacing:0.5px">false</div>
<div class="t" style="left:133px;top:663px;font-size:10px;color:#3d3d3d;font-weight:bold;letter-spacing:-0.3px">In</div>
<div class="t" style="left:128px;top:663px;width:296px;text-align:right;font-size:10px;color:#3d3d3d;font-weight:bold;letter-spacing:0.5px">false</div>
<svg class="ab" style="left:0;top:0" width="1091" height="737"><path d="M549 448.2 L578.6 448.2 A4.5 4.5 0 0 1 587.6 448.2 L612.0 448.2 A4.5 4.5 0 0 1 621.0 448.2 L650.5 448.2 L650.5 600.2 L681 600.2" fill="none" stroke="#eeeeee" stroke-width="1.6" stroke-linejoin="miter"/><path d="M430 650.2 L549.5 650.2 L549.5 617.2 L549.5 617.2 L578.6 617.2 A4.5 4.5 0 0 1 587.6 617.2 L612.0 617.2 A4.5 4.5 0 0 1 621.0 617.2 L681 617.2" fill="none" stroke="#eeeeee" stroke-width="1.6" stroke-linejoin="miter"/><path d="M1.5 127 L1.5 144.2 L145 144.2" fill="none" stroke="#eeeeee" stroke-width="1.6" stroke-linejoin="miter"/><path d="M279 127.19999999999999 L346.5 127.19999999999999 L346.5 161.2 L415 161.2" fill="none" stroke="#eeeeee" stroke-width="1.6" stroke-linejoin="miter"/><path d="M549 144.2 L616.5 144.2 L616.5 650.2 L681 650.2" fill="none" stroke="#eeeeee" stroke-width="1.6" stroke-linejoin="miter"/><path d="M0 279.2 L141 279.2" fill="none" stroke="#eeeeee" stroke-width="1.6" stroke-linejoin="miter"/><path d="M282 262.2 L346.5 262.2 L346.5 313.2 L411 313.2" fill="none" stroke="#3ad88a" stroke-width="1.7" stroke-linejoin="miter"/><path d="M552 296.2 L583.1 296.2 L583.1 667.2 L681 667.2" fill="none" stroke="#3ad88a" stroke-width="1.7" stroke-linejoin="miter"/><path d="M0 465.20000000000005 L94 465.20000000000005" fill="none" stroke="#eeeeee" stroke-width="1.6" stroke-linejoin="miter"/><path d="M0 482.20000000000005 L94 482.20000000000005" fill="none" stroke="#eeeeee" stroke-width="1.6" stroke-linejoin="miter"/><path d="M279 448.2 L346.5 448.2 L346.5 515.2 L415 515.2" fill="none" stroke="#eeeeee" stroke-width="1.6" stroke-linejoin="miter"/><path d="M822 330.2 L861.5 330.2 L861.5 313.2 L904 313.2" fill="none" stroke="#eeeeee" stroke-width="1.6" stroke-linejoin="miter"/><path d="M822 347.2 L882.5 347.2 L882.5 448.2 L904 448.2" fill="none" stroke="#eeeeee" stroke-width="1.6" stroke-linejoin="miter"/><path d="M405.5 465.20000000000005 L415 465.20000000000005" stroke="#e8e8e8" stroke-width="1"/><circle cx="405.5" cy="465.20000000000005" r="4" fill="#e8e8e8"/><path d="M119 667.2 L128 667.2" stroke="#e8e8e8" stroke-width="1"/><circle cx="119" cy="667.2" r="4" fill="#e8e8e8"/><path d="M1046.8 296.2 L1038 296.2" stroke="#e8e8e8" stroke-width="1"/><circle cx="1046.8" cy="296.2" r="4" fill="#e8e8e8"/><path d="M1046.8 431.2 L1038 431.2" stroke="#e8e8e8" stroke-width="1"/><circle cx="1046.8" cy="431.2" r="4" fill="#e8e8e8"/></svg>
<div class="t" style="left:1052px;top:288px;font-size:9.5px;color:#f0f0f0;">3</div>
<div class="t" style="left:1052px;top:423px;font-size:9.5px;color:#f0f0f0;">2</div>
<div class="ab" style="left:408px;top:285px;width:7px;height:7px;background:#000;border:1px solid #fff"></div>
<div class="ab" style="left:548px;top:285px;width:7px;height:7px;background:#000;border:1px solid #fff"></div>
</div>
<div class="ab" style="left:1516px;top:32px;width:6px;height:810px;background:#4e4e4e"></div>
<div class="ab" style="left:1510px;top:55px;width:1px;height:756px;background:#3e3e3e"></div>
<div class="ab" style="left:1493px;top:56px;width:17px;height:754px;background:#f0f0f0"></div>
<div class="ab" style="left:1494px;top:81px;width:15px;height:120px;background:#cdcdcd"></div>
<svg class="ab" style="left:1496px;top:60px" width="12" height="10" viewBox="0 0 12 10"><path d="M2 7.5l4-4 4 4" fill="none" stroke="#505050" stroke-width="1.7"/></svg>
<svg class="ab" style="left:1495px;top:781px" width="12" height="10" viewBox="0 0 12 10"><path d="M2 2.5l4 4 4-4" fill="none" stroke="#505050" stroke-width="1.7"/></svg>
<div class="ab" style="left:402px;top:793px;width:1091px;height:17px;background:#f0f0f0"></div>
<div class="ab" style="left:495px;top:794px;width:267px;height:15px;background:#cdcdcd"></div>
<svg class="ab" style="left:405px;top:796px" width="10" height="12" viewBox="0 0 10 12"><path d="M8 1.8l-4.8 4.2 4.8 4.2" fill="none" stroke="#505050" stroke-width="1.7"/></svg>
<svg class="ab" style="left:1480px;top:796px" width="10" height="12" viewBox="0 0 10 12"><path d="M2.5 1.8l4.8 4.2-4.8 4.2" fill="none" stroke="#505050" stroke-width="1.7"/></svg>
<div class="ab" style="left:404px;top:810px;width:78px;height:28px;background:#5a5a5a;border:1px solid #474747;border-top:none"></div>
<div class="t" style="left:414px;top:819px;font-size:11.8px;color:#e6e6e6;">Wire Sheet</div>
<div class="ab" style="left:482px;top:810px;width:97px;height:26px;background:#525252;border:1px solid #454545;border-top:none;border-radius:0 0 2px 2px"></div>
<div class="t" style="left:491px;top:818px;font-size:11.6px;color:#d8d8d8;">Property Sheet</div>
<div class="ab" style="left:580px;top:810px;width:72px;height:26px;background:#525252;border:1px solid #454545;border-top:none;border-radius:0 0 2px 2px"></div>
<div class="t" style="left:589px;top:818px;font-size:11.6px;color:#d8d8d8;">Slot Sheet</div>
<div class="ab" style="left:653px;top:810px;width:73px;height:26px;background:#525252;border:1px solid #454545;border-top:none;border-radius:0 0 2px 2px"></div>
<div class="t" style="left:662px;top:818px;font-size:11.6px;color:#d8d8d8;">Link Sheet</div>
<div class="ab" style="left:4px;top:54px;width:392px;height:61px;background:#565656;border-top:1px solid #4a4a4a"></div>
<div class="ab" style="left:18px;top:74px;width:217px;height:21px;background:#5f5f5f;border-top:1px solid #464646;border-left:1px solid #4c4c4c"></div>
<div class="t" style="left:22px;top:79px;font-size:11.7px;color:#989898;">Enter text to search...</div>
<svg class="ab" style="left:222px;top:82px" width="9" height="6" viewBox="0 0 9 6"><path d="M0.5 1h8l-4 4.5z" fill="#e0e0e0"/></svg>
<div class="ab" style="left:240px;top:74px;width:69px;height:21px;background:#555555;border:1px solid #414141;border-radius:3px"></div>
<div class="t" style="left:263px;top:79px;font-size:12px;color:#f0f0f0;">Find</div>
<div class="ab" style="left:314px;top:74px;width:69px;height:21px;background:#555555;border:1px solid #414141;border-radius:3px"></div>
<div class="t" style="left:334px;top:79px;font-size:12px;color:#f0f0f0;">Clear</div>
<div class="ab" style="left:4px;top:115px;width:392px;height:23px;background:#5d5d5d;border-top:1px solid #4d4d4d;border-bottom:1px solid #4d4d4d"></div>
<div class="ab" style="left:377px;top:116px;width:1px;height:21px;background:#4d4d4d"></div>
<div class="t" style="left:9px;top:120px;font-size:12px;color:#f0f0f0;">Workspace tree</div>
<div class="ab" style="left:4px;top:138px;width:374px;height:406px;background:#606060"></div>
<div class="ab" style="left:378px;top:138px;width:17px;height:406px;background:#5a5a5a"></div>
<svg class="ab" style="left:382px;top:143px" width="9" height="6" viewBox="0 0 9 6"><path d="M0.5 5h8l-4-4.5z" fill="#e8e8e8"/></svg>
<svg class="ab" style="left:382px;top:532px" width="9" height="6" viewBox="0 0 9 6"><path d="M0.5 1h8l-4 4.5z" fill="#e8e8e8"/></svg>
<div class="ab" style="left:383px;top:221px;width:7px;height:150px;border-radius:4px;background:linear-gradient(90deg,#dcdcdc,#aeaeae)"></div>
<div class="ab" style="left:131px;top:194px;width:247px;height:28px;background:#4e4e4e"></div>
<div class="ab" style="left:4px;top:138px;width:374px;height:404px;overflow:hidden">
<svg class="ab" style="left:77px;top:13px" width="9" height="6" viewBox="0 0 9 6"><path d="M0.5 1h8l-4 4.5z" fill="#d8d8d8"/></svg>
<svg class="ab" style="left:91px;top:7px" width="16" height="14" viewBox="0 0 16 14"><path d="M1.5 2.5h4.5l1.5 2h7v8h-13z" fill="none" stroke="#d8d8d8" stroke-width="1" stroke-linejoin="round"/></svg>
<div class="t" style="left:113px;top:8px;font-size:12px;color:#e4e4e4;">Logic</div>
<svg class="ab" style="left:97px;top:38px" width="6" height="8" viewBox="0 0 6 8"><path d="M1 0.5l4 3.5-4 3.5z" fill="#d8d8d8"/></svg>
<svg class="ab" style="left:109px;top:35px" width="16" height="14" viewBox="0 0 16 14"><path d="M1.5 2.5h4.5l1.5 2h7v8h-13z" fill="none" stroke="#d8d8d8" stroke-width="1" stroke-linejoin="round"/></svg>
<div class="t" style="left:131px;top:36px;font-size:12px;color:#e4e4e4;">Boiler</div>
<svg class="ab" style="left:95px;top:69px" width="9" height="6" viewBox="0 0 9 6"><path d="M0.5 1h8l-4 4.5z" fill="#d8d8d8"/></svg>
<svg class="ab" style="left:109px;top:63px" width="16" height="14" viewBox="0 0 16 14"><path d="M1.5 2.5h4.5l1.5 2h7v8h-13z" fill="none" stroke="#d8d8d8" stroke-width="1" stroke-linejoin="round"/></svg>
<div class="t" style="left:131px;top:64px;font-size:12px;color:#e9a932;">Pumps</div>
<svg class="ab" style="left:127px;top:90px" width="17" height="17" viewBox="0 0 17 17"><circle cx="8.5" cy="8.5" r="8" fill="#f4f4f4"/><text x="8.6" y="12.7" text-anchor="middle" font-family="Liberation Sans" font-size="11.5" fill="#404040">B</text></svg>
<div class="t" style="left:149px;top:92px;font-size:12px;color:#e4e4e4;">PumpFlow</div>
<svg class="ab" style="left:113px;top:122px" width="6" height="8" viewBox="0 0 6 8"><path d="M1 0.5l4 3.5-4 3.5z" fill="#d8d8d8"/></svg>
<svg class="ab" style="left:127px;top:118px" width="17" height="17" viewBox="0 0 17 17"><circle cx="8.5" cy="8.5" r="8" fill="#f4f4f4"/><text x="8.6" y="12.7" text-anchor="middle" font-family="Liberation Sans" font-size="11.5" fill="#404040">B</text></svg>
<div class="t" style="left:149px;top:120px;font-size:12px;color:#e4e4e4;">Pump1_Out</div>
<svg class="ab" style="left:113px;top:150px" width="6" height="8" viewBox="0 0 6 8"><path d="M1 0.5l4 3.5-4 3.5z" fill="#d8d8d8"/></svg>
<svg class="ab" style="left:127px;top:146px" width="17" height="17" viewBox="0 0 17 17"><circle cx="8.5" cy="8.5" r="8" fill="#f4f4f4"/><text x="8.6" y="12.7" text-anchor="middle" font-family="Liberation Sans" font-size="11.5" fill="#404040">B</text></svg>
<div class="t" style="left:149px;top:148px;font-size:12px;color:#e4e4e4;">Pump2_Out</div>
<svg class="ab" style="left:127px;top:174px" width="17" height="17" viewBox="0 0 17 17"><circle cx="8.5" cy="8.5" r="8" fill="#f4f4f4"/><text x="8.6" y="12.7" text-anchor="middle" font-family="Liberation Sans" font-size="11.5" fill="#404040">N</text></svg>
<div class="t" style="left:149px;top:176px;font-size:12px;color:#e4e4e4;">AntyFrost</div>
<svg class="ab" style="left:127px;top:202px" width="17" height="17" viewBox="0 0 17 17"><circle cx="8.5" cy="8.5" r="8" fill="#f4f4f4"/><text x="8.6" y="12.7" text-anchor="middle" font-family="Liberation Sans" font-size="11.5" fill="#404040">N</text></svg>
<div class="t" style="left:149px;top:204px;font-size:12px;color:#e4e4e4;">OutsideTemp</div>
<svg class="ab" style="left:127px;top:230px" width="17" height="17" viewBox="0 0 17 17"><path d="M1.5 1.5h10 M1.5 1.5v11" stroke="#d0d0d0" stroke-width="1" fill="none"/><path d="M4 15.5h10.5v-11" stroke="#e0e0e0" stroke-width="1.2" fill="none"/><path d="M5 8.5h6" stroke="#e0e0e0" stroke-width="1.2"/><circle cx="8" cy="6" r=".8" fill="#e0e0e0"/><circle cx="8" cy="11" r=".8" fill="#e0e0e0"/></svg>
<div class="t" style="left:149px;top:232px;font-size:12px;color:#e4e4e4;">Divide</div>
<svg class="ab" style="left:127px;top:258px" width="17" height="17" viewBox="0 0 17 17"><path d="M1.5 1.5h10 M1.5 1.5v11" stroke="#d0d0d0" stroke-width="1" fill="none"/><path d="M4 15.5h10.5v-11" stroke="#e0e0e0" stroke-width="1.2" fill="none"/><path d="M5 8.5h6" stroke="#e0e0e0" stroke-width="1.2"/><circle cx="8" cy="6" r=".8" fill="#e0e0e0"/><circle cx="8" cy="11" r=".8" fill="#e0e0e0"/></svg>
<div class="t" style="left:149px;top:260px;font-size:12px;color:#e4e4e4;">Divide1</div>
<svg class="ab" style="left:127px;top:286px" width="17" height="17" viewBox="0 0 17 17"><path d="M1.5 1.5h10 M1.5 1.5v11" stroke="#d0d0d0" stroke-width="1" fill="none"/><path d="M4 15.5h10.5v-11" stroke="#e0e0e0" stroke-width="1.2" fill="none"/><path d="M4 5.5l3 3-3 3 M7.5 5.5l3 3-3 3" stroke="#e8e8e8" stroke-width="1" fill="none"/></svg>
<div class="t" style="left:149px;top:288px;font-size:12px;color:#e4e4e4;">FloatTo</div>
<svg class="ab" style="left:127px;top:314px" width="17" height="17" viewBox="0 0 17 17"><path d="M1.5 1.5h10 M1.5 1.5v11" stroke="#d0d0d0" stroke-width="1" fill="none"/><path d="M4 15.5h10.5v-11" stroke="#e0e0e0" stroke-width="1.2" fill="none"/><path d="M4 5.5l3 3-3 3 M7.5 5.5l3 3-3 3" stroke="#e8e8e8" stroke-width="1" fill="none"/></svg>
<div class="t" style="left:149px;top:316px;font-size:12px;color:#e4e4e4;">FloatT1</div>
<svg class="ab" style="left:127px;top:342px" width="17" height="17" viewBox="0 0 17 17"><path d="M1.5 1.5h10 M1.5 1.5v11" stroke="#d0d0d0" stroke-width="1" fill="none"/><path d="M4 15.5h10.5v-11" stroke="#e0e0e0" stroke-width="1.2" fill="none"/><path d="M4 5.5l3 3-3 3 M7.5 5.5l3 3-3 3" stroke="#e8e8e8" stroke-width="1" fill="none"/></svg>
<div class="t" style="left:149px;top:344px;font-size:12px;color:#e4e4e4;">Integer</div>
<svg class="ab" style="left:127px;top:370px" width="17" height="17" viewBox="0 0 17 17"><path d="M1.5 1.5h10 M1.5 1.5v11" stroke="#d0d0d0" stroke-width="1" fill="none"/><path d="M4 15.5h10.5v-11" stroke="#e0e0e0" stroke-width="1.2" fill="none"/><path d="M4 5.5l3 3-3 3 M7.5 5.5l3 3-3 3" stroke="#e8e8e8" stroke-width="1" fill="none"/></svg>
<div class="t" style="left:149px;top:372px;font-size:12px;color:#e4e4e4;">Intege1</div>
<svg class="ab" style="left:127px;top:398px" width="17" height="17" viewBox="0 0 17 17"><path d="M1.5 1.5h10 M1.5 1.5v11" stroke="#d0d0d0" stroke-width="1" fill="none"/><path d="M4 15.5h10.5v-11" stroke="#e0e0e0" stroke-width="1.2" fill="none"/><path d="M4 12.5h3.5v-3h3v-3h3.5" stroke="#e0e0e0" stroke-width="1.2" fill="none"/></svg>
<div class="t" style="left:149px;top:400px;font-size:12px;color:#e4e4e4;">LeadLag</div>
</div>
<div class="ab" style="left:4px;top:544px;width:392px;height:1px;background:#4a4a4a"></div>
<div class="ab" style="left:4px;top:572px;width:392px;height:54px;background:#565656;border-top:1px solid #4a4a4a"></div>
<div class="ab" style="left:18px;top:588px;width:217px;height:21px;background:#5f5f5f;border-top:1px solid #464646;border-left:1px solid #4c4c4c"></div>
<div class="t" style="left:22px;top:593px;font-size:11.7px;color:#989898;">Enter text to search...</div>
<svg class="ab" style="left:222px;top:596px" width="9" height="6" viewBox="0 0 9 6"><path d="M0.5 1h8l-4 4.5z" fill="#e0e0e0"/></svg>
<div class="ab" style="left:240px;top:588px;width:69px;height:21px;background:#555555;border:1px solid #414141;border-radius:3px"></div>
<div class="t" style="left:263px;top:593px;font-size:12px;color:#f0f0f0;">Find</div>
<div class="ab" style="left:314px;top:588px;width:69px;height:21px;background:#555555;border:1px solid #414141;border-radius:3px"></div>
<div class="t" style="left:334px;top:593px;font-size:12px;color:#f0f0f0;">Clear</div>
<div class="ab" style="left:4px;top:626px;width:392px;height:22px;background:#5d5d5d;border-top:1px solid #4d4d4d;border-bottom:1px solid #4d4d4d"></div>
<div class="ab" style="left:255px;top:627px;width:1px;height:20px;background:#4d4d4d"></div>
<div class="ab" style="left:377px;top:627px;width:1px;height:20px;background:#4d4d4d"></div>
<div class="t" style="left:9px;top:630px;font-size:12px;color:#f0f0f0;">Text</div>
<div class="t" style="left:260px;top:630px;font-size:12px;color:#f0f0f0;">Size</div>
<div class="ab" style="left:4px;top:648px;width:374px;height:191px;background:#606060"></div>
<div class="ab" style="left:378px;top:648px;width:17px;height:191px;background:#5a5a5a"></div>
<svg class="ab" style="left:382px;top:653px" width="9" height="6" viewBox="0 0 9 6"><path d="M0.5 5h8l-4-4.5z" fill="#e8e8e8"/></svg>
<svg class="ab" style="left:382px;top:828px" width="9" height="6" viewBox="0 0 9 6"><path d="M0.5 1h8l-4 4.5z" fill="#e8e8e8"/></svg>
<div class="ab" style="left:383px;top:666px;width:7px;height:60px;border-radius:4px;background:linear-gradient(90deg,#dcdcdc,#aeaeae)"></div>
<div class="ab" style="left:41px;top:648px;width:215px;height:28px;background:#4e4e4e"></div>
<svg class="ab" style="left:11px;top:658px" width="6" height="8" viewBox="0 0 6 8"><path d="M1 0.5l4 3.5-4 3.5z" fill="#d8d8d8"/></svg>
<svg class="ab" style="left:24px;top:655px" width="14" height="14" viewBox="0 0 14 14"><rect x="0.5" y="0.5" width="5" height="5" fill="none" stroke="#c8c8c8"/><rect x="8.5" y="0.5" width="5" height="5" fill="none" stroke="#c8c8c8"/><rect x="0.5" y="8.5" width="5" height="5" fill="none" stroke="#c8c8c8"/><rect x="8.5" y="8.5" width="5" height="5" fill="none" stroke="#c8c8c8"/></svg>
<div class="t" style="left:45px;top:656px;font-size:12px;color:#e9a932;">sys</div>
<div class="t" style="left:260px;top:656px;font-size:12px;color:#e4e4e4;">320.00 B</div>
<svg class="ab" style="left:11px;top:686px" width="6" height="8" viewBox="0 0 6 8"><path d="M1 0.5l4 3.5-4 3.5z" fill="#d8d8d8"/></svg>
<svg class="ab" style="left:24px;top:683px" width="14" height="14" viewBox="0 0 14 14"><rect x="0.5" y="0.5" width="5" height="5" fill="none" stroke="#c8c8c8"/><rect x="8.5" y="0.5" width="5" height="5" fill="none" stroke="#c8c8c8"/><rect x="0.5" y="8.5" width="5" height="5" fill="none" stroke="#c8c8c8"/><rect x="8.5" y="8.5" width="5" height="5" fill="none" stroke="#c8c8c8"/></svg>
<div class="t" style="left:45px;top:684px;font-size:12px;color:#e4e4e4;">datetime</div>
<div class="t" style="left:260px;top:684px;font-size:12px;color:#e4e4e4;">208.00 B</div>
<svg class="ab" style="left:11px;top:714px" width="6" height="8" viewBox="0 0 6 8"><path d="M1 0.5l4 3.5-4 3.5z" fill="#d8d8d8"/></svg>
<svg class="ab" style="left:24px;top:711px" width="14" height="14" viewBox="0 0 14 14"><rect x="0.5" y="0.5" width="5" height="5" fill="none" stroke="#c8c8c8"/><rect x="8.5" y="0.5" width="5" height="5" fill="none" stroke="#c8c8c8"/><rect x="0.5" y="8.5" width="5" height="5" fill="none" stroke="#c8c8c8"/><rect x="8.5" y="8.5" width="5" height="5" fill="none" stroke="#c8c8c8"/></svg>
<div class="t" style="left:45px;top:712px;font-size:12px;color:#e4e4e4;">iSMA_BACnet</div>
<div class="t" style="left:260px;top:712px;font-size:12px;color:#e4e4e4;">7.45 kB</div>
<svg class="ab" style="left:11px;top:742px" width="6" height="8" viewBox="0 0 6 8"><path d="M1 0.5l4 3.5-4 3.5z" fill="#d8d8d8"/></svg>
<svg class="ab" style="left:24px;top:739px" width="14" height="14" viewBox="0 0 14 14"><rect x="0.5" y="0.5" width="5" height="5" fill="none" stroke="#c8c8c8"/><rect x="8.5" y="0.5" width="5" height="5" fill="none" stroke="#c8c8c8"/><rect x="0.5" y="8.5" width="5" height="5" fill="none" stroke="#c8c8c8"/><rect x="8.5" y="8.5" width="5" height="5" fill="none" stroke="#c8c8c8"/></svg>
<div class="t" style="left:45px;top:740px;font-size:12px;color:#e4e4e4;">iSMA_BACnetIpMaster</div>
<div class="t" style="left:260px;top:740px;font-size:12px;color:#e4e4e4;">3.63 kB</div>
<svg class="ab" style="left:11px;top:770px" width="6" height="8" viewBox="0 0 6 8"><path d="M1 0.5l4 3.5-4 3.5z" fill="#d8d8d8"/></svg>
<svg class="ab" style="left:24px;top:767px" width="14" height="14" viewBox="0 0 14 14"><rect x="0.5" y="0.5" width="5" height="5" fill="none" stroke="#c8c8c8"/><rect x="8.5" y="0.5" width="5" height="5" fill="none" stroke="#c8c8c8"/><rect x="0.5" y="8.5" width="5" height="5" fill="none" stroke="#c8c8c8"/><rect x="8.5" y="8.5" width="5" height="5" fill="none" stroke="#c8c8c8"/></svg>
<div class="t" style="left:45px;top:768px;font-size:12px;color:#e4e4e4;">iSMA_BACnetMSTPMaster</div>
<div class="t" style="left:260px;top:768px;font-size:12px;color:#e4e4e4;">3.62 kB</div>
<svg class="ab" style="left:11px;top:798px" width="6" height="8" viewBox="0 0 6 8"><path d="M1 0.5l4 3.5-4 3.5z" fill="#d8d8d8"/></svg>
<svg class="ab" style="left:24px;top:795px" width="14" height="14" viewBox="0 0 14 14"><rect x="0.5" y="0.5" width="5" height="5" fill="none" stroke="#c8c8c8"/><rect x="8.5" y="0.5" width="5" height="5" fill="none" stroke="#c8c8c8"/><rect x="0.5" y="8.5" width="5" height="5" fill="none" stroke="#c8c8c8"/><rect x="8.5" y="8.5" width="5" height="5" fill="none" stroke="#c8c8c8"/></svg>
<div class="t" style="left:45px;top:796px;font-size:12px;color:#e4e4e4;">iSMA_LCD</div>
<div class="t" style="left:260px;top:796px;font-size:12px;color:#e4e4e4;">4.50 kB</div>
<svg class="ab" style="left:11px;top:826px" width="6" height="8" viewBox="0 0 6 8"><path d="M1 0.5l4 3.5-4 3.5z" fill="#d8d8d8"/></svg>
<svg class="ab" style="left:24px;top:823px" width="14" height="14" viewBox="0 0 14 14"><rect x="0.5" y="0.5" width="5" height="5" fill="none" stroke="#c8c8c8"/><rect x="8.5" y="0.5" width="5" height="5" fill="none" stroke="#c8c8c8"/><rect x="0.5" y="8.5" width="5" height="5" fill="none" stroke="#c8c8c8"/><rect x="8.5" y="8.5" width="5" height="5" fill="none" stroke="#c8c8c8"/></svg>
<div class="t" style="left:45px;top:824px;font-size:12px;color:#e4e4e4;">iSMA_ModbusAsyncNetwork</div>
<div class="t" style="left:260px;top:824px;font-size:12px;color:#e4e4e4;">1.52 kB</div>
<div class="ab" style="left:1525px;top:55px;width:390px;height:38px;background:#585858;border:1px solid #4c4c4c;border-radius:3px"></div>
<div class="t" style="left:1544px;top:69px;font-size:12px;color:#f4f4f4;font-weight:bold;letter-spacing:0.62px">FloatT1 [iSMA_control::FloatToInteger]</div>
<div class="ab" style="left:1525px;top:94px;width:390px;height:746px;background:#5f5f5f;border-top:2px solid #464646"></div>
<div class="ab" style="left:1525px;top:96px;width:390px;height:20px;background:#5c5c5c;border-bottom:1px solid #4f4f4f"></div>
<div class="ab" style="left:1720px;top:96px;width:1px;height:20px;background:#4d4d4d"></div>
<div class="t" style="left:1529px;top:100px;font-size:12px;color:#f0f0f0;">Name</div>
<div class="t" style="left:1724px;top:100px;font-size:12px;color:#f0f0f0;">Value</div>
<div class="ab" style="left:1561px;top:116px;width:159px;height:29px;background:#4b4b4b;border-bottom:1px solid #505050"></div>
<div class="ab" style="left:1721px;top:116px;width:194px;height:29px;background:#747474;border-bottom:1px solid #505050;border-left:1px solid #505050"></div>
<div class="t" style="left:1566px;top:126px;font-size:12px;color:#e9a932;">Meta</div>
<div class="t" style="left:1725px;top:126px;font-size:12px;color:#ececec;">Group1</div>
<svg class="ab" style="left:1543px;top:122px" width="16" height="17" viewBox="0 0 16 17"><path d="M8 1l6 2.5v5.5c0 3.5-3 6-6 7-3-1-6-3.5-6-7V3.5z" fill="none" stroke="#e0e0e0" stroke-width="1"/><path d="M5 8.5l2.2 2.2 4-4" fill="none" stroke="#e0e0e0" stroke-width="1"/></svg>
<div class="ab" style="left:1561px;top:145px;width:159px;height:29px;background:#5e5e5e;border-bottom:1px solid #505050"></div>
<div class="ab" style="left:1721px;top:145px;width:194px;height:29px;background:#5e5e5e;border-bottom:1px solid #505050;border-left:1px solid #505050"></div>
<div class="t" style="left:1566px;top:155px;font-size:12px;color:#e4e4e4;">Status</div>
<div class="t" style="left:1725px;top:155px;font-size:12px;color:#ececec;">Ok</div>
<svg class="ab" style="left:1544px;top:153px" width="14" height="14" viewBox="0 0 14 14"><path d="M1.8 7.5A5.3 5.3 0 0 1 6.5 1.8 M12.2 6.5A5.3 5.3 0 0 1 7.5 12.2" fill="none" stroke="#e8e8e8" stroke-width="1.5"/></svg>
<div class="ab" style="left:1561px;top:174px;width:159px;height:29px;background:#5e5e5e;border-bottom:1px solid #505050"></div>
<div class="ab" style="left:1721px;top:174px;width:194px;height:29px;background:#5e5e5e;border-bottom:1px solid #505050;border-left:1px solid #505050"></div>
<div class="t" style="left:1566px;top:184px;font-size:12px;color:#e4e4e4;">Out</div>
<div class="t" style="left:1725px;top:184px;font-size:12px;color:#ececec;">56</div>
<svg class="ab" style="left:1544px;top:182px" width="14" height="14" viewBox="0 0 14 14"><path d="M1.8 7.5A5.3 5.3 0 0 1 6.5 1.8 M12.2 6.5A5.3 5.3 0 0 1 7.5 12.2" fill="none" stroke="#e8e8e8" stroke-width="1.5"/></svg>
<div class="ab" style="left:1561px;top:203px;width:159px;height:29px;background:#5e5e5e;border-bottom:1px solid #505050"></div>
<div class="ab" style="left:1721px;top:203px;width:194px;height:29px;background:#747474;border-bottom:1px solid #505050;border-left:1px solid #505050"></div>
<div class="t" style="left:1566px;top:213px;font-size:12px;color:#e4e4e4;">In</div>
<div class="t" style="left:1725px;top:213px;font-size:12px;color:#ececec;">56.33</div>
<svg class="ab" style="left:1544px;top:211px" width="14" height="14" viewBox="0 0 14 14"><path d="M1.8 7.5A5.3 5.3 0 0 1 6.5 1.8 M12.2 6.5A5.3 5.3 0 0 1 7.5 12.2" fill="none" stroke="#e8e8e8" stroke-width="1.5"/></svg>
<div class="ab" style="left:4px;top:868px;width:1912px;height:60px;background:#545454;border-top:1px solid #4a4a4a"></div>
<div class="t" style="left:9px;top:871px;font-size:12.1px;color:#ececec;">15:17:17.932 - [D] [192.168.10.223:1876 :: Tstat :: Object properties] execution in: 0.0107131 s</div>
<div class="t" style="left:9px;top:886px;font-size:12.1px;color:#ececec;">15:17:31.116 - [D] [192.168.10.223:1876 :: Or :: Object properties] execution in: 0.0058947 s</div>
<div class="t" style="left:9px;top:901px;font-size:12.1px;color:#ececec;">15:17:32.860 - [D] [192.168.10.223:1876 :: FloatT1 :: Object properties] execution in: 0.0111073 s</div>
<div class="ab" style="left:1898px;top:869px;width:17px;height:58px;background:#575757"></div>
<svg class="ab" style="left:1902px;top:874px" width="9" height="6" viewBox="0 0 9 6"><path d="M0.5 5h8l-4-4.5z" fill="#e8e8e8"/></svg>
<svg class="ab" style="left:1902px;top:916px" width="9" height="6" viewBox="0 0 9 6"><path d="M0.5 1h8l-4 4.5z" fill="#e8e8e8"/></svg>
<div class="ab" style="left:1903px;top:893px;width:7px;height:16px;border-radius:4px;background:linear-gradient(90deg,#dcdcdc,#aeaeae)"></div>
<div class="ab" style="left:0;top:930px;width:1918px;height:31px;background:linear-gradient(#585858,#4b4b4b)"></div>
<div class="ab" style="left:0;top:961px;width:1921px;height:1px;background:#1a1a1a"></div>
<div class="t" style="left:6px;top:941px;font-size:12px;color:#ececec;">Console</div>
<div class="ab" style="left:53px;top:937px;width:67px;height:19px;background:linear-gradient(#4c4c4c,#545454);border:1px solid #484848"></div>
<div class="ab" style="left:90px;top:939px;width:29px;height:15px;background:linear-gradient(#e0e0e0,#bdbdbd)"></div>
<div class="ab" style="left:124px;top:934px;width:20px;height:25px;border:1px solid #9a9a9a"></div>
<div class="t" style="left:129px;top:940px;font-size:12px;color:#ececec;">D</div>
<div class="t" style="left:148px;top:940px;font-size:12px;color:#ececec;">A</div>
<div class="t" style="left:172px;top:940px;font-size:12px;color:#ececec;">I</div>
<div class="t" style="left:190px;top:940px;font-size:12px;color:#ececec;">E</div>
<div class="t" style="left:207px;top:940px;font-size:12px;color:#ececec;">Clr</div>
<div class="ab" style="left:246px;top:934px;width:1px;height:24px;background:#4a4a4a"></div>
<div class="ab" style="left:4px;top:54px;width:392px;height:490px;border:1px solid #424242"></div>
<div class="ab" style="left:4px;top:572px;width:392px;height:268px;border:1px solid #424242"></div>
<div class="ab" style="left:1524px;top:54px;width:392px;height:787px;border:1px solid #424242"></div>
<div class="ab" style="left:4px;top:868px;width:1912px;height:61px;border:1px solid #424242"></div>
</div></body></html>
